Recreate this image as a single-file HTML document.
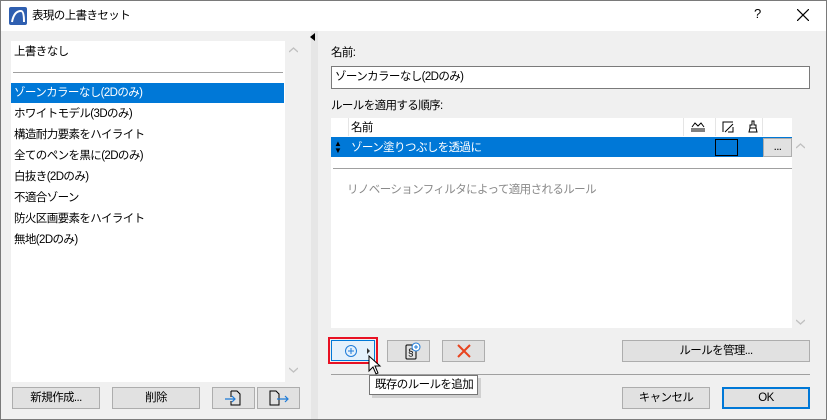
<!DOCTYPE html>
<html><head><meta charset="utf-8"><style>
*{box-sizing:border-box;margin:0;padding:0}
body{width:827px;height:420px;overflow:hidden;background:#f0f0f0;font-family:"Liberation Sans","Noto Sans CJK JP",sans-serif;font-size:11.5px;letter-spacing:-0.6px;color:#000;position:relative;white-space:nowrap}
.a{position:absolute}
.win{left:0;top:0;width:827px;height:420px;border:1px solid #7a7a7a}
.title{left:1px;top:1px;width:825px;height:30px;background:#fff}
.list{left:11px;top:41px;width:274px;height:341px;background:#fff}
.it{position:absolute;left:3px;height:20px;line-height:20px}
.sel{background:#0078d7;color:#fff}
.btn{position:absolute;background:#e1e1e1;border:1px solid #adadad;text-align:center;line-height:20px}
.strip{left:311px;top:31px;width:7px;height:388px;background:#e6e6e6}
</style></head><body>
<div class="a win"></div>
<div class="a title"></div>
<svg class="a" style="left:9px;top:7px" width="18" height="18"><rect x="0" y="0" width="18" height="18" rx="2" fill="#2f5fb0"/><path d="M3 15 Q5 4 12 4 Q15 4 15 15" stroke="#fff" stroke-width="2" fill="none"/></svg>
<div class="a" style="left:32px;top:7px">表現の上書きセット</div>
<div class="a" style="left:754px;top:6px;font-size:13px">?</div>
<svg class="a" style="left:797px;top:9px" width="12" height="12"><path d="M0 0L12 12M12 0L0 12" stroke="#000" stroke-width="1.2"/></svg>
<div class="a strip"></div>
<svg class="a" style="left:310px;top:33px" width="6" height="8"><path d="M5 0L0 4L5 8Z" fill="#000"/></svg>

<div class="a list">
<div class="it" style="top:1px">上書きなし</div>
<div class="a" style="left:2px;top:31px;width:270px;height:1px;background:#a0a0a0"></div>
<div class="it sel" style="top:42px;left:0;width:273px;padding-left:3px">ゾーンカラーなし(2Dのみ)</div>
<div class="it" style="top:63px">ホワイトモデル(3Dのみ)</div>
<div class="it" style="top:84px">構造耐力要素をハイライト</div>
<div class="it" style="top:105px">全てのペンを黒に(2Dのみ)</div>
<div class="it" style="top:126px">白抜き(2Dのみ)</div>
<div class="it" style="top:147px">不適合ゾーン</div>
<div class="it" style="top:168px">防火区画要素をハイライト</div>
<div class="it" style="top:189px">無地(2Dのみ)</div>
</div>
<svg class="a" style="left:289px;top:47px" width="9" height="6"><path d="M0 5L4.5 1L9 5" stroke="#c0c0c0" stroke-width="1.4" fill="none"/></svg>
<svg class="a" style="left:289px;top:367px" width="9" height="6"><path d="M0 1L4.5 5L9 1" stroke="#c0c0c0" stroke-width="1.4" fill="none"/></svg>

<div class="btn" style="left:12px;top:387px;width:88px;height:22px">新規作成...</div>
<div class="btn" style="left:112px;top:387px;width:88px;height:22px">削除</div>
<div class="btn" style="left:212px;top:387px;width:43px;height:22px"><svg width="20" height="18" style="margin-top:1px"><path d="M7 2H13L16 5V16H7V12M7 8V2" stroke="#000" fill="none"/><path d="M1 10H11M8 7L11 10L8 13" stroke="#1e7bd8" fill="none" stroke-width="1.2"/></svg></div>
<div class="btn" style="left:257px;top:387px;width:43px;height:22px"><svg width="22" height="18" style="margin-top:1px"><path d="M2 2H8L11 5V16H2Z" stroke="#000" fill="none"/><path d="M9 10H20M17 7L20 10L17 13" stroke="#1e7bd8" fill="none" stroke-width="1.2"/></svg></div>

<div class="a" style="left:331px;top:44px">名前:</div>
<div class="a" style="left:331px;top:66px;width:479px;height:23px;background:#fff;border:1px solid #7a7a7a;padding-left:3px;line-height:21px">ゾーンカラーなし(2Dのみ)</div>
<div class="a" style="left:331px;top:97px">ルールを適用する順序:</div>
<div class="a" style="left:331px;top:118px;width:461px;height:210px;background:#fff"></div>
<div class="a" style="left:348px;top:118px;width:1px;height:18px;background:#e5e5e5"></div>
<div class="a" style="left:683px;top:118px;width:1px;height:18px;background:#e5e5e5"></div>
<div class="a" style="left:715px;top:118px;width:1px;height:18px;background:#e5e5e5"></div>
<div class="a" style="left:762px;top:118px;width:1px;height:18px;background:#e5e5e5"></div>
<div class="a" style="left:351px;top:119px">名前</div>
<svg class="a" style="left:690px;top:121px" width="16" height="12"><path d="M2 6L5 2L8 5L11 2L14 6M1 8H15M1 10H15" stroke="#000" fill="none"/></svg>
<svg class="a" style="left:722px;top:121px" width="12" height="12"><path d="M1 11V1H11" stroke="#000" fill="none"/><path d="M3 11L11 3M6 11H11V6" stroke="#000" fill="none"/></svg>
<svg class="a" style="left:748px;top:120px" width="10" height="13"><path d="M4 1H6V5H8V8H2V5H4ZM2 8L1 12H9L8 8" stroke="#000" fill="none"/></svg>
<div class="a sel" style="left:331px;top:137px;width:461px;height:20px"></div>
<div class="a" style="left:334px;top:140px;color:#000;font-size:8px;line-height:7px">▲<br>▼</div>
<div class="a" style="left:351px;top:139px;color:#fff">ゾーン塗りつぶしを透過に</div>
<div class="a" style="left:715px;top:139px;width:23px;height:17px;border:1px solid #000"></div>
<div class="btn" style="left:763px;top:138px;width:29px;height:19px;line-height:16px">...</div>
<div class="a" style="left:333px;top:168px;width:459px;height:1px;background:#a0a0a0"></div>
<div class="a" style="left:347px;top:181px;color:#8a8a8a">リノベーションフィルタによって適用されるルール</div>
<svg class="a" style="left:796px;top:143px" width="9" height="6"><path d="M0 5L4.5 1L9 5" stroke="#c0c0c0" stroke-width="1.4" fill="none"/></svg>
<svg class="a" style="left:796px;top:319px" width="9" height="6"><path d="M0 1L4.5 5L9 1" stroke="#c0c0c0" stroke-width="1.4" fill="none"/></svg>

<div class="a" style="left:328px;top:337px;width:50px;height:27px;border:2px solid #e81123"></div>
<div class="btn" style="left:331px;top:340px;width:44px;height:21px;background:#e5f1fb;border:1px solid #0078d7"><svg width="40" height="19"><circle cx="18" cy="10" r="5.5" stroke="#1e7bd8" fill="none"/><path d="M18 7V13M15 10H21" stroke="#1e7bd8"/><path d="M34 7L37 10L34 13Z" fill="#333"/></svg></div>
<div class="btn" style="left:387px;top:340px;width:43px;height:22px"><svg width="30" height="20"><rect x="12" y="4" width="10" height="14" rx="1" stroke="#000" fill="none"/><text x="14" y="15" font-size="10" font-family="Liberation Sans">§</text><circle cx="22" cy="6" r="4" fill="#fff" stroke="#1e7bd8"/><path d="M22 4V8M20 6H24" stroke="#1e7bd8"/></svg></div>
<div class="btn" style="left:442px;top:340px;width:43px;height:22px"><svg width="16" height="16" style="margin-top:2px"><path d="M2 2L14 14M14 2L2 14" stroke="#e8431e" stroke-width="2"/></svg></div>
<div class="btn" style="left:622px;top:340px;width:188px;height:22px">ルールを管理...</div>
<div class="a" style="left:331px;top:374px;width:479px;height:1px;background:#a0a0a0"></div>
<div class="a" style="left:372px;top:378px;width:109px;height:20px;background:#d0d0d0"></div>
<div class="a" style="left:369px;top:375px;width:109px;height:20px;background:#fff;border:1px solid #767676;line-height:18px;padding-left:5px;overflow:hidden">既存のルールを追加</div>
<svg class="a" style="left:368px;top:355px" width="14" height="22"><path d="M1 1V16L5 12L8 19L10 18L7 11H12Z" fill="#fff" stroke="#000"/></svg>
<div class="btn" style="left:622px;top:387px;width:88px;height:22px">キャンセル</div>
<div class="btn" style="left:722px;top:387px;width:88px;height:22px;border:2px solid #0078d7;line-height:18px">OK</div>
</body></html>
